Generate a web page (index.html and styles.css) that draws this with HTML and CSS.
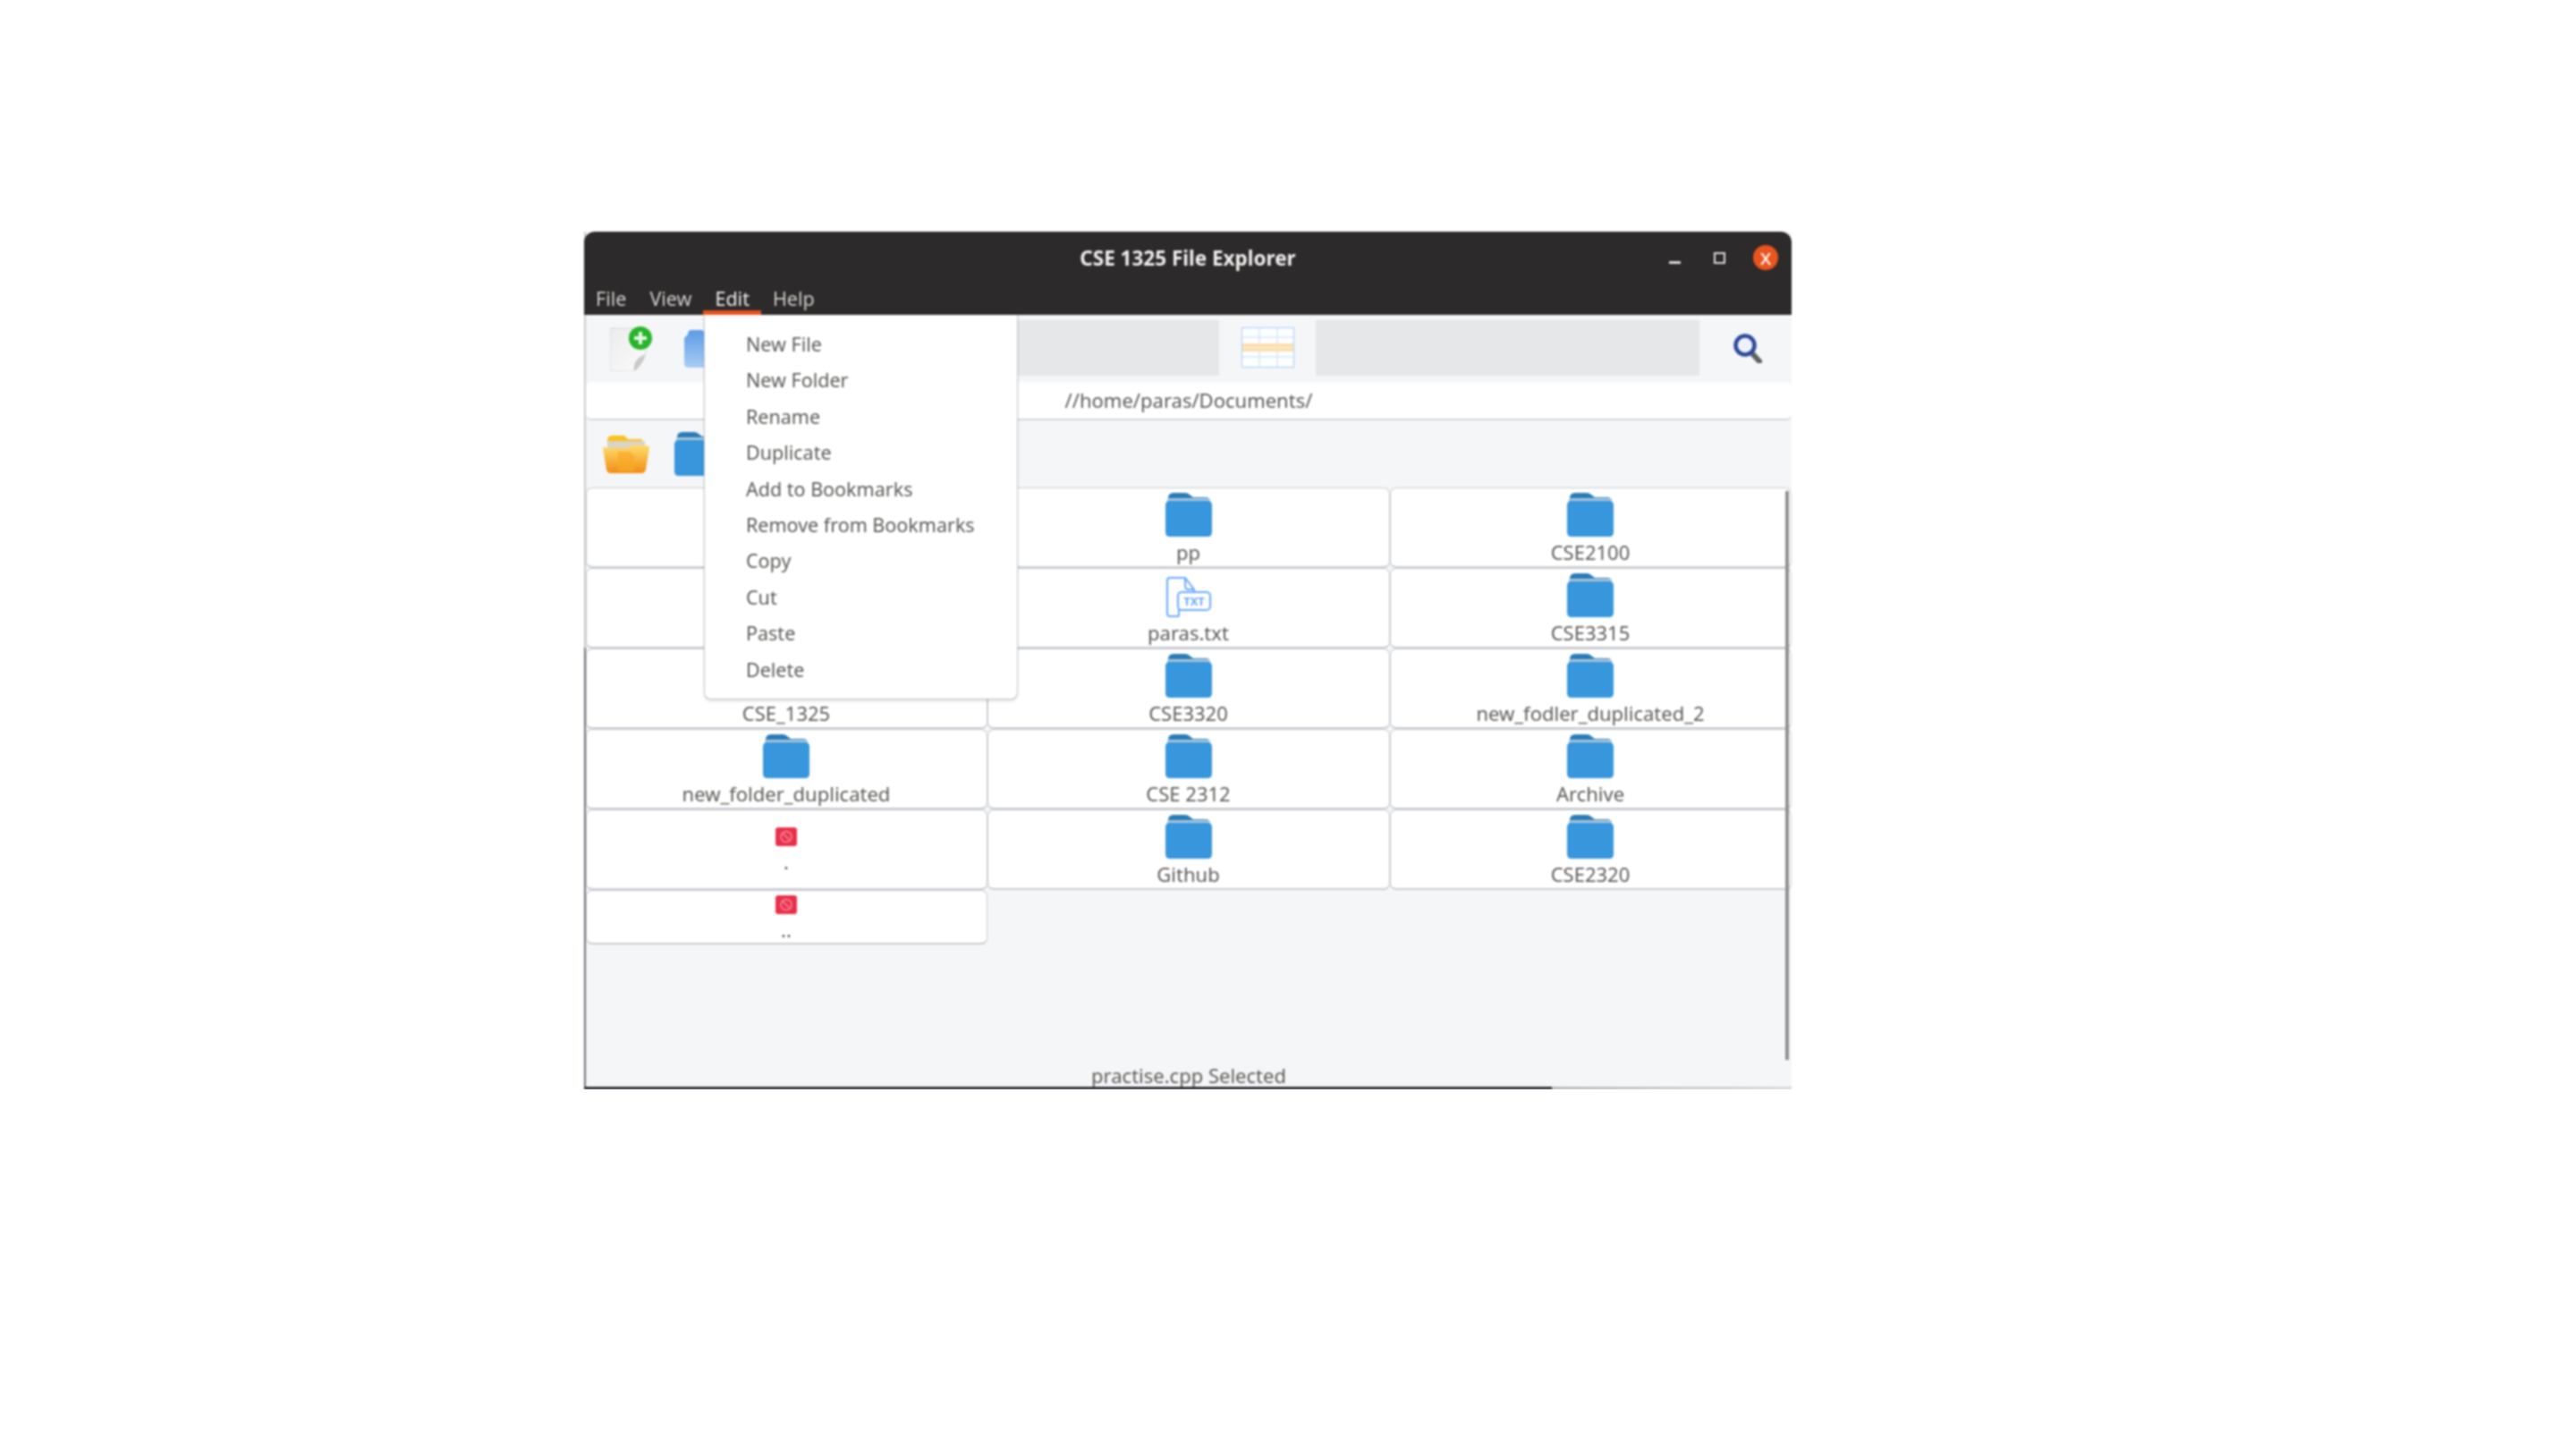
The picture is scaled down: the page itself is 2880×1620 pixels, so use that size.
FILE: index.html
```html
<!DOCTYPE html>
<html>
<head>
	<meta charset="utf-8">
	<title>CSE 1325 File Explorer</title>
	<link rel="stylesheet" href="styles.css">
</head>
<body>
	<svg class="defs" width="0" height="0">
		<symbol id="folder" viewBox="0 0 52 49">
			<path d="M3 6Q3 0 9 0H22Q25 0 27 2L31 5H46Q49 5 49 9V14H3Z" fill="#2a7cb8"/>
			<rect x="2" y="6" width="48" height="6" rx="2" fill="#a9c5da"/>
			<path d="M0 14Q0 9 5 9H47Q52 9 52 14V44Q52 49 47 49H5Q0 49 0 44Z" fill="#3796dc"/>
		</symbol>
		<symbol id="stop" viewBox="0 0 24 21">
			<rect width="24" height="21" rx="3" fill="#e9304b"/>
			<circle cx="12" cy="10.5" r="6" fill="none" stroke="#f58c9b" stroke-width="1.5"/>
			<path d="M8 6.5L16 14.5" stroke="#f58c9b" stroke-width="1.5"/>
		</symbol>
		<linearGradient id="blueFade" x1="0" y1="0" x2="0" y2="1">
			<stop offset="0" stop-color="#5b9be8"/>
			<stop offset="1" stop-color="#a9cdf5"/>
		</linearGradient>
		<linearGradient id="orangeFade" x1="0" y1="0" x2="0" y2="1">
			<stop offset="0" stop-color="#ffdc6a"/>
			<stop offset="1" stop-color="#f28c14"/>
		</linearGradient>
		<linearGradient id="paperFade" x1="0" y1="0" x2="1" y2="1">
			<stop offset="0" stop-color="#ececec"/>
			<stop offset="1" stop-color="#fbfbfb"/>
		</linearGradient>
	</svg>

	<div class="window">
		<div class="titlebar">
			<div class="title-row">
				<span class="title">CSE 1325 File Explorer</span>
				<div class="controls">
					<span class="ctl-min"></span>
					<span class="ctl-max"></span>
					<span class="ctl-close">x</span>
				</div>
			</div>
			<div class="menubar">
				<span class="menu-name">File</span>
				<span class="menu-name">View</span>
				<span class="menu-name menu-open">Edit</span>
				<span class="menu-name">Help</span>
			</div>
		</div>

		<div class="toolbar">
			<svg class="tool-new" viewBox="0 0 47 50">
				<path d="M0 2H40V30L27 50H0Z" fill="url(#paperFade)" stroke="#d8d8d8"/>
				<path d="M27 50Q25 36 40 31Q36 44 27 50Z" fill="#c9c9c9"/>
				<circle cx="34" cy="13" r="13" fill="#27b52c"/>
				<path d="M34 6V20M27 13H41" stroke="#e4f5e4" stroke-width="4"/>
			</svg>
			<svg class="tool-folder" viewBox="0 0 46 42">
				<path d="M4 5Q4 0 8 0H20L24 4H46V42H6Q0 42 0 38V9Z" fill="url(#blueFade)"/>
			</svg>
			<div class="tool-box tool-box-a"></div>
			<svg class="tool-table" viewBox="0 0 59 45">
				<rect x="0.5" y="0.5" width="58" height="44" fill="#fdfeff" stroke="#a8cdf8"/>
				<path d="M20 1V44M40 1V44M1 11H58M1 33H58" stroke="#d6e8fc" stroke-width="1.5"/>
				<rect x="1" y="18" width="57" height="9" fill="#fbdfae"/>
				<path d="M1 22.5H58" stroke="#fff3dd"/>
			</svg>
			<div class="tool-box tool-box-b"></div>
			<svg class="tool-search" viewBox="0 0 33 34">
				<path d="M20 22L29 32" stroke="#5e6268" stroke-width="6" stroke-linecap="round"/>
				<circle cx="13" cy="14" r="10.5" fill="#eef2fa" stroke="#2e4a9c" stroke-width="4.5"/>
			</svg>
		</div>

		<div class="pathbar">//home/paras/Documents/</div>

		<div class="bookmarks">
			<svg class="mark-open" viewBox="0 0 52 42">
				<path d="M5 6Q5 0 10 0H24L28 4H44V14H5Z" fill="#fbc21c"/>
				<rect x="5" y="6" width="42" height="9" fill="#d9d4c6"/>
				<path d="M0 14L4 38Q5 42 9 42H43Q47 42 48 38L52 14Q52 11 48 11H32L28 14H4Q0 11 0 14Z" fill="url(#orangeFade)"/>
				<path d="M17 18H30L35 23V40H17Z" fill="#f8a928" opacity=".7"/>
			</svg>
			<svg class="mark-folder"><use href="#folder"/></svg>
		</div>

		<div class="files">
			<div class="grid">
				<div class="cell"></div>
				<div class="cell"><svg class="icon"><use href="#folder"/></svg><span class="label">pp</span></div>
				<div class="cell"><svg class="icon"><use href="#folder"/></svg><span class="label">CSE2100</span></div>

				<div class="cell"></div>
				<div class="cell cell-doc">
					<svg class="icon icon-txt" viewBox="0 0 50 45">
						<path d="M14 32V43Q14 44 12 44H4Q1 44 1 41V4Q1 1 4 1H21L31 14V17" fill="none" stroke="#6ca8ff" stroke-width="2"/>
						<path d="M21 1V10Q21 14 25 14H31" fill="none" stroke="#6ca8ff" stroke-width="2"/>
						<rect x="13" y="17" width="36" height="20" rx="4" fill="#fff" stroke="#6ca8ff" stroke-width="2"/>
						<text x="31" y="32" class="txt-mark">TXT</text>
					</svg>
					<span class="label">paras.txt</span>
				</div>
				<div class="cell"><svg class="icon"><use href="#folder"/></svg><span class="label">CSE3315</span></div>

				<div class="cell"><svg class="icon"><use href="#folder"/></svg><span class="label">CSE_1325</span></div>
				<div class="cell"><svg class="icon"><use href="#folder"/></svg><span class="label">CSE3320</span></div>
				<div class="cell"><svg class="icon"><use href="#folder"/></svg><span class="label">new_fodler_duplicated_2</span></div>

				<div class="cell"><svg class="icon"><use href="#folder"/></svg><span class="label">new_folder_duplicated</span></div>
				<div class="cell"><svg class="icon"><use href="#folder"/></svg><span class="label">CSE 2312</span></div>
				<div class="cell"><svg class="icon"><use href="#folder"/></svg><span class="label">Archive</span></div>

				<div class="cell cell-dot"><svg class="icon-stop"><use href="#stop"/></svg><span class="label label-stop">.</span></div>
				<div class="cell"><svg class="icon"><use href="#folder"/></svg><span class="label">Github</span></div>
				<div class="cell"><svg class="icon"><use href="#folder"/></svg><span class="label">CSE2320</span></div>

				<div class="cell cell-dotdot"><svg class="icon-stop"><use href="#stop"/></svg><span class="label label-stop">..</span></div>
			</div>
			<div class="scrollbar"></div>
		</div>

		<div class="status">practise.cpp Selected</div>
		<div class="bottom-edge"></div>

		<ul class="dropdown">
			<li>New File</li>
			<li>New Folder</li>
			<li>Rename</li>
			<li>Duplicate</li>
			<li>Add to Bookmarks</li>
			<li>Remove from Bookmarks</li>
			<li>Copy</li>
			<li>Cut</li>
			<li>Paste</li>
			<li>Delete</li>
		</ul>
	</div>
</body>
</html>
```

FILE: styles.css
```css
html, body {
	margin: 0;
	background: #fff;
}
body {
	padding: 259px 0 0 653px;
	font-family: "Noto Sans", sans-serif;
	font-size: 21.5px;
	color: #5e5c5a;
}
.defs {
	position: absolute;
}
svg {
	display: block;
	flex: none;
}
.window {
	position: relative;
	display: flex;
	flex-direction: column;
	width: 1348px;
	height: 959px;
	background: #f5f6f7;
	border-left: 2px solid;
	border-image: linear-gradient(#c9cbcd 0, #c9cbcd 465px, #77707a 465px, #77707a 100%) 1;
	filter: blur(0.8px);
}

/* title + menu */
.titlebar {
	height: 93px;
	margin-left: -2px;
	background: #2c2a2a;
	border-radius: 12px 12px 0 0;
	flex: none;
}
.title-row {
	position: relative;
	display: flex;
	justify-content: center;
	align-items: center;
	height: 58px;
}
.title {
	color: #f0efed;
	font-size: 22.5px;
	font-weight: 700;
}
.controls {
	position: absolute;
	top: 15px;
	right: 14px;
	display: flex;
	align-items: center;
}
.ctl-min {
	width: 13px;
	height: 3px;
	margin: 10px 37px 0 0;
	background: #dcdbd8;
}
.ctl-max {
	width: 9px;
	height: 9px;
	margin-right: 31px;
	border: 2px solid #dcdbd8;
}
.ctl-close {
	width: 28px;
	height: 28px;
	margin-right: 1px;
	border-radius: 50%;
	background: #e9541f;
	color: #fff;
	font-size: 24px;
	line-height: 25px;
	text-align: center;
}
.menubar {
	display: flex;
	height: 35px;
}
.menu-name {
	padding: 0 13px;
	color: #cfcdc9;
	line-height: 34px;
}
.menu-open {
	color: #eeeeec;
	box-shadow: inset 0 -5px 0 #e9541f;
}

/* toolbar */
.toolbar {
	display: flex;
	align-items: center;
	height: 75px;
	flex: none;
}
.tool-new {
	width: 47px;
	height: 50px;
	margin: 0 36px 0 27px;
}
.tool-folder {
	width: 46px;
	height: 42px;
	margin-right: 20px;
}
.tool-box {
	height: 62px;
	margin-top: -2px;
	background: #e6e7e9;
}
.tool-box-a {
	width: 532px;
	margin-right: 25px;
}
.tool-table {
	width: 59px;
	height: 45px;
	margin: -2px 24px 0 0;
}
.tool-box-b {
	width: 429px;
	margin-right: 38px;
}
.tool-search {
	width: 33px;
	height: 34px;
	margin-top: -2px;
}

.pathbar {
	height: 41px;
	font-size: 22px;
	line-height: 41px;
	background: #fff;
	border-bottom: 2px solid #d3d6d9;
	border-radius: 6px;
	text-align: center;
	flex: none;
}
.bookmarks {
	display: flex;
	align-items: center;
	height: 75px;
	padding-left: 19px;
	flex: none;
}
.mark-open {
	width: 52px;
	height: 42px;
	margin-right: 28px;
}
.mark-folder {
	width: 52px;
	height: 49px;
}

/* file grid */
.files {
	position: relative;
	flex: 1;
}
.grid {
	display: grid;
	grid-template-columns: 449px 450px 449px;
	grid-template-rows: 90px 90px 90px 90px 90px 61px;
}
.cell {
	display: flex;
	flex-direction: column;
	align-items: center;
	padding: 5px 1px 0 0;
	box-sizing: border-box;
	background: #fff;
	border: 1px solid #c9ccd0;
	border-width: 1px 1px 2px 1px;
	border-radius: 7px;
}
.cell-doc {
	padding-top: 9px;
}
.cell-dot {
	padding-top: 19px;
}
.cell-dotdot {
	padding-top: 5px;
}
.icon {
	width: 52px;
	height: 49px;
}
.icon-txt {
	height: 45px;
}
.icon-stop {
	width: 24px;
	height: 21px;
}
.label {
	margin-top: 3px;
	font-size: 22px;
	line-height: 28px;
}
.label-stop {
	margin-top: 3px;
}
.txt-mark {
	fill: #6ca8ff;
	font-size: 13px;
	font-weight: 700;
	text-anchor: middle;
}
.scrollbar {
	position: absolute;
	top: 4px;
	right: 3px;
	width: 4px;
	height: 636px;
	background: #909090;
}

.status {
	height: 25px;
	font-size: 22px;
	line-height: 24px;
	text-align: center;
	flex: none;
}
.bottom-edge {
	height: 3px;
	margin-left: -2px;
	background: linear-gradient(90deg, #2f2733 0, #2f2733 1082px, #b8b8b8 1082px, #d8d8d8 100%);
	flex: none;
}

/* edit menu */
.dropdown {
	position: absolute;
	top: 93px;
	left: 132px;
	width: 351px;
	height: 430px;
	margin: 0;
	padding: 13px 0;
	box-sizing: border-box;
	list-style: none;
	background: #fff;
	border: 1px solid #c4c8cc;
	border-top: 0;
	border-radius: 0 0 8px 8px;
	box-shadow: 0 2px 3px rgba(0, 0, 0, .12);
}
.dropdown li {
	height: 40.4px;
	padding-left: 46px;
	line-height: 40.4px;
}
```
